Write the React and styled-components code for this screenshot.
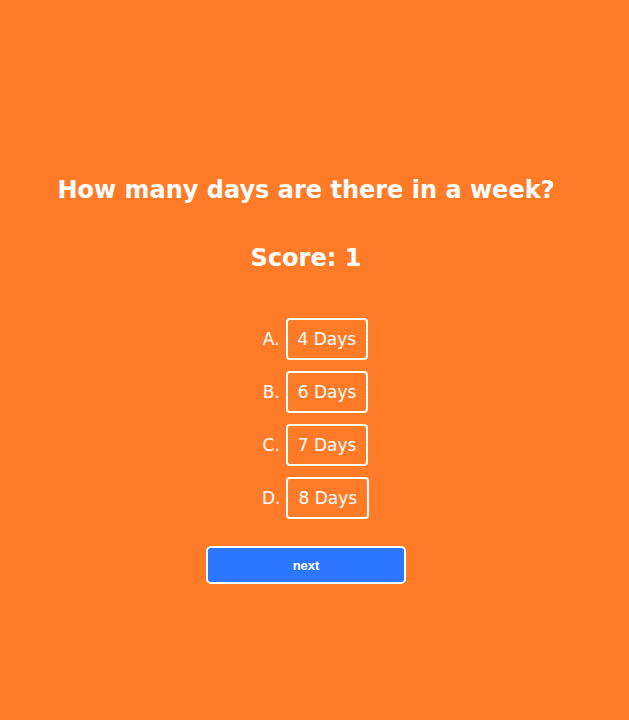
import React, { useState } from 'react';
import styled, { createGlobalStyle } from 'styled-components';

const GlobalStyle = createGlobalStyle`
  html, body {
    margin: 0;
    padding: 0;
    background: #ff7b27;
  }
  body {
    font-family: "DejaVu Sans", Verdana, sans-serif;
    color: #ffffff;
  }
`;

const Page = styled.div`
  min-height: 720px;
  display: flex;
  flex-direction: column;
  align-items: center;
  padding-top: 172px;
  box-sizing: border-box;
`;

const Question = styled.h1`
  align-self: flex-start;
  margin: 0;
  width: 612px;
  text-align: center;
  font-size: 24px;
  font-weight: bold;
  line-height: 36px;
`;

const Score = styled.h2`
  align-self: flex-start;
  margin: 32px 0 0;
  width: 612px;
  text-align: center;
  font-size: 24px;
  font-weight: bold;
  line-height: 36px;
`;

const Options = styled.ul`
  list-style: none;
  margin: 42px 0 0 2px;
  padding: 0;
  display: flex;
  flex-direction: column;
  align-items: center;
  gap: 11px;
`;

const Option = styled.li`
  display: flex;
  align-items: center;
  gap: 6px;
  font-size: 17px;
`;

const Choice = styled.button`
  height: 42px;
  padding: 0 10px;
  background: transparent;
  border: 2px solid #ffffff;
  border-radius: 4px;
  color: #ffffff;
  font-family: "DejaVu Sans", Verdana, sans-serif;
  font-size: 17px;
  cursor: pointer;
  ${({ $picked }) => $picked && 'background: rgba(255,255,255,0.15);'}
`;

const Next = styled.button`
  align-self: flex-start;
  margin: 27px 0 0 206px;
  width: 200px;
  height: 38px;
  background: #2d76ff;
  border: 2px solid #ffffff;
  border-radius: 5px;
  color: #ffffff;
  font-family: "Liberation Sans", Arial, sans-serif;
  font-size: 13px;
  font-weight: bold;
  cursor: pointer;
`;

const answers = ['4 Days', '6 Days', '7 Days', '8 Days'];
const letters = ['A.', 'B.', 'C.', 'D.'];

export default function App() {
  const [picked, setPicked] = useState(null);

  return (
    <>
      <GlobalStyle />
      <Page>
        <Question>How many days are there in a week?</Question>
        <Score>Score: 1</Score>
        <Options>
          {answers.map((a, i) => (
            <Option key={a}>
              <span>{letters[i]}</span>
              <Choice $picked={picked === i} onClick={() => setPicked(i)}>
                {a}
              </Choice>
            </Option>
          ))}
        </Options>
        <Next>next</Next>
      </Page>
    </>
  );
}
